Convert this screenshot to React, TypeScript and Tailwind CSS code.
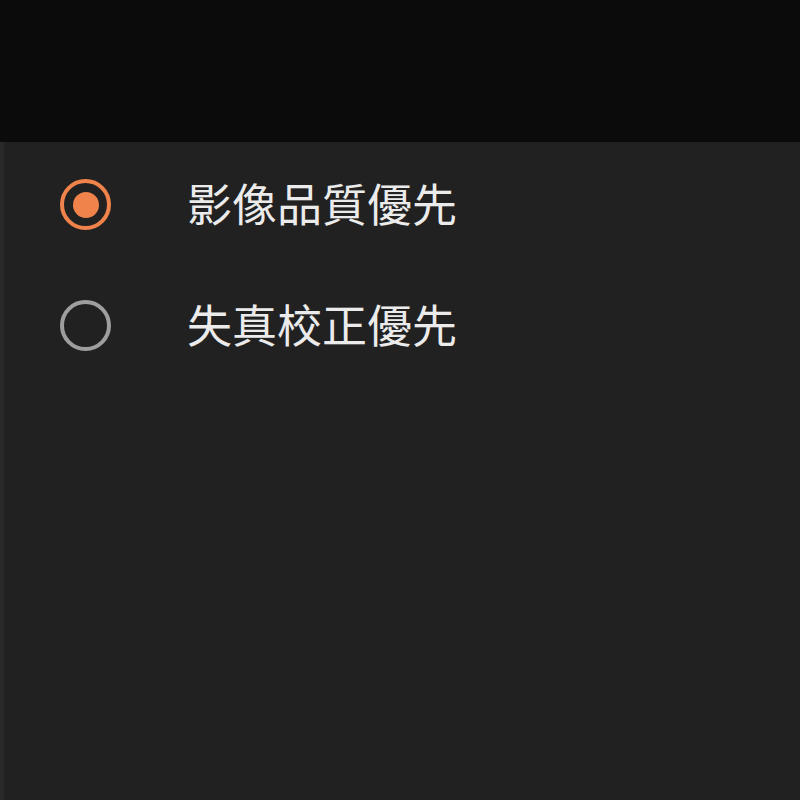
import { useState } from 'react';

const options = ['影像品質優先', '失真校正優先'];

export default function App() {
  const [selected, setSelected] = useState(0);

  return (
    <div
      className="w-[800px] h-[800px] flex flex-col bg-[#212121] overflow-hidden"
      style={{ fontFamily: '"Noto Sans CJK TC", "Noto Sans", sans-serif' }}
    >
      <div className="h-[142px] bg-[#0b0b0b] shrink-0" />
      <div className="flex-1 flex flex-col pt-[2px] border-l-4 border-[#2a2a2a]">
        {options.map((label, i) => (
          <button
            key={label}
            onClick={() => setSelected(i)}
            className="h-[121px] flex items-center pl-[56px] text-left"
          >
            <span
              className={
                selected === i
                  ? 'w-[51px] h-[51px] rounded-full border-[4px] border-[#f0834b] flex items-center justify-center shrink-0'
                  : 'w-[51px] h-[51px] rounded-full border-[4px] border-[#9e9e9e] flex items-center justify-center shrink-0'
              }
            >
              {selected === i && <span className="w-[26px] h-[26px] rounded-full bg-[#f0834b]" />}
            </span>
            <span className="ml-[76px] pb-[5px] text-[45px] leading-none text-[#ebebeb]">{label}</span>
          </button>
        ))}
      </div>
    </div>
  );
}
